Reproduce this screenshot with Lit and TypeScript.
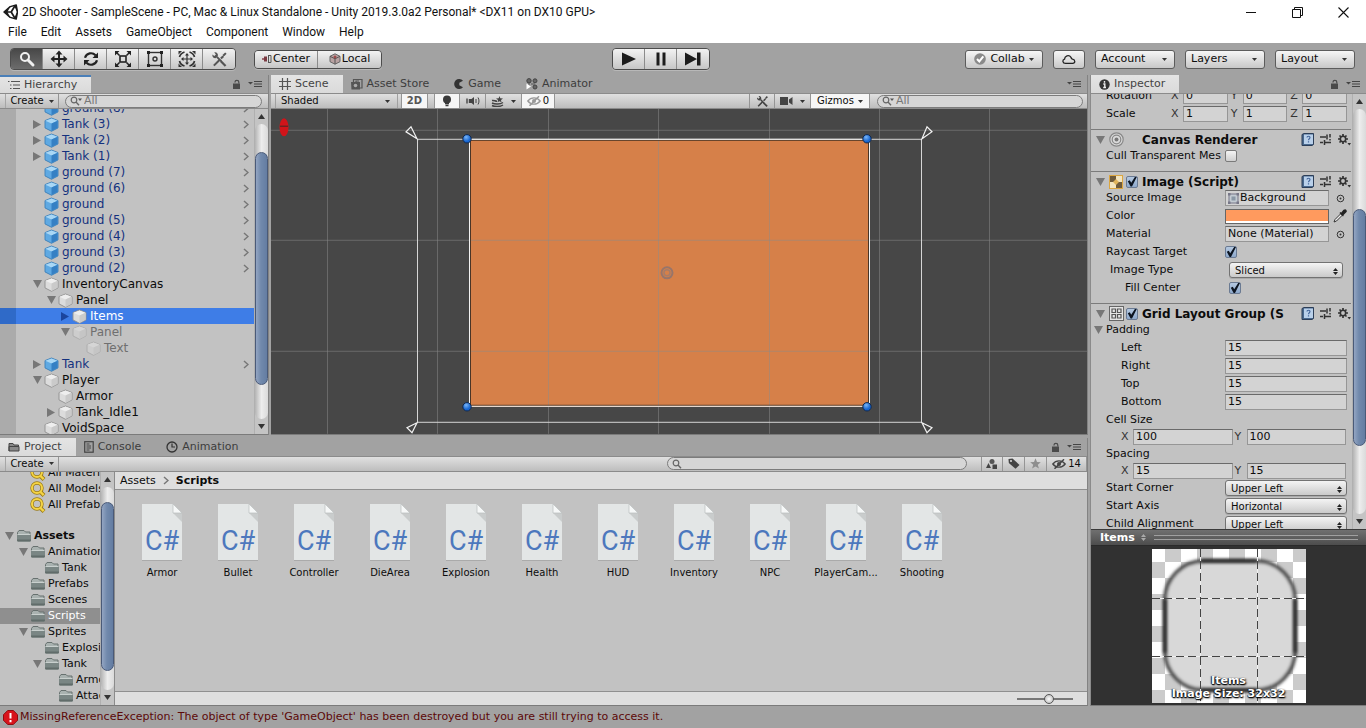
import { LitElement, html, css, svg, nothing, TemplateResult } from "lit";
import { customElement } from "lit/decorators.js";
import { classMap } from "lit/directives/class-map.js";

type Node = {
  name: string;
  level: number;
  kind?: "prefab" | "plain";
  arrow?: "open" | "closed";
  chevron?: boolean;
  selected?: boolean;
  dim?: boolean;
};

const prefab = (name: string, arrow?: "open" | "closed"): Node => ({
  name, level: 0, kind: "prefab", arrow, chevron: true,
});

const HIERARCHY: Node[] = [
  prefab("ground (8)"),
  prefab("Tank (3)", "closed"),
  prefab("Tank (2)", "closed"),
  prefab("Tank (1)", "closed"),
  prefab("ground (7)"),
  prefab("ground (6)"),
  prefab("ground"),
  prefab("ground (5)"),
  prefab("ground (4)"),
  prefab("ground (3)"),
  prefab("ground (2)"),
  { name: "InventoryCanvas", level: 0, arrow: "open" },
  { name: "Panel", level: 1, arrow: "open" },
  { name: "Items", level: 2, arrow: "closed", selected: true },
  { name: "Panel", level: 2, arrow: "open", dim: true },
  { name: "Text", level: 3, dim: true },
  prefab("Tank", "closed"),
  { name: "Player", level: 0, arrow: "open" },
  { name: "Armor", level: 1 },
  { name: "Tank_Idle1", level: 1, arrow: "closed" },
  { name: "VoidSpace", level: 0 },
];

type Folder = { name: string; level: number; open?: boolean; icon?: "search" | "folder"; selected?: boolean; bold?: boolean };

const FOLDERS: (Folder | null)[] = [
  { name: "All Materials", level: 1, icon: "search" },
  { name: "All Models", level: 1, icon: "search" },
  { name: "All Prefabs", level: 1, icon: "search" },
  null,
  { name: "Assets", level: 0, open: true, bold: true },
  { name: "Animation", level: 1, open: true },
  { name: "Tank", level: 2 },
  { name: "Prefabs", level: 1 },
  { name: "Scenes", level: 1 },
  { name: "Scripts", level: 1, selected: true },
  { name: "Sprites", level: 1, open: true },
  { name: "Explosion", level: 2 },
  { name: "Tank", level: 2, open: true },
  { name: "Armor", level: 3 },
  { name: "Attack", level: 3 },
];

const SCRIPTS = [
  "Armor", "Bullet", "Controller", "DieArea", "Explosion", "Health",
  "HUD", "Inventory", "NPC", "PlayerCam...", "Shooting",
];

const icon = (w: number, h: number, body: unknown, cls = "") =>
  html`<svg class=${cls} width=${w} height=${h} viewBox="0 0 ${w} ${h}" fill="none" stroke="none" aria-hidden="true">${body}</svg>`;

const unityLogo = icon(15, 16, svg`
  <path d="M13.200 1 7.200 2.600 1 8l6.200 5.400 6 1.600 1.300-7z" stroke="#1c1c1c" stroke-width="1.500" stroke-linejoin="round"/>
  <path d="M1 8h7.200M8.200 8l3.600-6M8.200 8l3.600 6" stroke="#1c1c1c" stroke-width="1.700"/>
  <path d="M13.200 1 11 1.600 14 8 11 14.400l2.200.6 1.300-7z" fill="#1c1c1c"/>
  <path d="M7.200 2.600 1 8l6.200 5.400L4.500 8z" fill="#1c1c1c"/>`);

const handIcon = icon(20, 18, svg`
  <circle cx="8" cy="7" r="4" stroke="#f0f0f0" stroke-width="2"/>
  <path d="m11 10 5 5" stroke="#f0f0f0" stroke-width="3" stroke-linecap="round"/>`);
const moveIcon = icon(20, 18, svg`
  <path d="M10 3v12M4 9h12" stroke="#222" stroke-width="2"/>
  <path d="M10 0.5 13.5 4.5h-7zM10 17.5 13.5 13.5h-7zM1.5 9 5.5 5.5v7zM18.5 9 14.5 5.5v7z" fill="#222"/>`);
const rotateIcon = icon(20, 18, svg`
  <path d="M4 7.800C5.500 2.800 11.500 2 14.500 5.200M16 10.200C14.500 15.200 8.500 16 5.500 12.800" stroke="#222" stroke-width="2.200"/>
  <path d="M17 2.500v5.500h-5.500zM3 15.500V10h5.500z" fill="#222"/>`);
const scaleIcon = icon(20, 18, svg`
  <rect x="7" y="6" width="6" height="6" stroke="#222" stroke-width="1.600"/>
  <path d="m3 2 3.500 3.500M17 2l-3.500 3.500M3 16l3.500-3.500M17 16l-3.500-3.500" stroke="#222" stroke-width="1.500"/>
  <path d="M2 1h4.500L2 5.500zM18 1h-4.500L18 5.500zM2 17h4.500L2 12.500zM18 17h-4.500l4.500-4.500z" fill="#222"/>`);
const rectIcon = icon(20, 18, svg`
  <rect x="3.500" y="2.500" width="13" height="13" stroke="#333" stroke-width="1.400"/>
  <circle cx="10" cy="9" r="2" stroke="#333" stroke-width="1.400"/>
  <path d="M2 1h3v3H2zM15 1h3v3h-3zM2 14h3v3H2zM15 14h3v3h-3z" fill="#222"/>`);
const transformIcon = icon(20, 18, svg`
  <path d="M10 4v10M5 9h10" stroke="#333" stroke-width="1.200"/>
  <path d="m10 3 2 2.500H8zM10 15l2-2.500H8zM4 9l2.500-2v4zM16 9l-2.500-2v4z" fill="#333"/>
  <path d="M2.500 7C3 4.800 5 2.800 7.500 2M17.500 7C17 4.800 15 2.800 12.500 2M2.500 11c.5 2.200 2.500 4.200 5 5M17.500 11c-.5 2.200-2.500 4.200-5 5" stroke="#333" stroke-width="1.700"/>
  <path d="M1.500 1h3.500l-3.500 3.500zM18.500 1H15l3.500 3.500zM1.500 17h3.500l-3.500-3.500zM18.500 17H15l3.500-3.500z" fill="#333"/>`);
const wrench = (w: number, h: number, color = "#555") => html`<svg width=${w} height=${h} viewBox="0 0 18 18" fill="none" aria-hidden="true">
  <path d="M3 15.500 9 9.500M10.500 8 13 5.500" stroke=${color} stroke-width="2.200"/>
  <path d="m13 3.500 2-2 1.500 1.500-2 2-2 1z" fill=${color}/>
  <path d="M6.500 6.500 11 11" stroke=${color} stroke-width="2"/>
  <path d="M3.500 1.500C6 1 8 3 7.200 5.800L5.500 7.500C3 8 1 6.300 1.500 3.600L3.500 5.300 5.200 3.700z" fill=${color}/>
  <path d="m11.300 10 5 5-1.700 1.700-5-5z" fill=${color}/></svg>`;

const playIcon = icon(16, 16, svg`<path d="M1 1.500 15 8 1 14.500z" fill="#1c1c1c"/>`);
const pauseIcon = icon(16, 16, svg`<path d="M3.500 1.500h3v13h-3zM9.500 1.500h3v13h-3z" fill="#1c1c1c"/>`);
const stepIcon = icon(16, 16, svg`<path d="M0 1.500 12 8 0 14.500zM12 1.500h3.500v13H12z" fill="#1c1c1c"/>`);

const pivotIcon = icon(10, 10, svg`
  <path d="M0 5h3" stroke="#8a4048" stroke-width="1.400"/><path d="M2 2.500h3v5H2z" fill="#7a3a42"/>
  <path d="M6 1.500h3M6 8.500h3M9 1.500v7M6.500 1.500v7" stroke="#555"/>`);
const localIcon = icon(12, 12, svg`
  <path d="M6 .8 11 3.300v5.400L6 11.200 1 8.700V3.300z" fill="#b9a2a2" stroke="#666"/>
  <path d="M1 3.300 6 5.800l5-2.500M6 5.800v5.400" stroke="#555"/><circle cx="6" cy="4" r="1.500" fill="#9c4a4a"/>`);
const collabIcon = icon(12, 12, svg`
  <circle cx="6" cy="6" r="5.800" fill="#8a8a8a"/><path d="m3 6 2.300 2.400L9.300 3.400" stroke="#fff" stroke-width="2"/>`);
const cloudIcon = icon(16, 12, svg`
  <path d="M4.500 10.300C1.500 10.300 1 7 3.500 6.200 3.700 3 7.800 1 10 4.300c.5 1.500.3 1.700 1.500 1.900 3 .6 3 4.100.2 4.100z" stroke="#222" stroke-width="1.300"/>`);

const smallCaret = icon(5, 3, svg`<path d="M0 0h5L2.500 3z" fill="#333"/>`, "caret");
const updown = icon(5, 7, svg`<path d="M0 3 2.500 0 5 3zM0 4 2.500 7 5 4z" fill="#222"/>`, "caret");

const hierarchyIcon = icon(12, 10, svg`
  <path d="M3 1.500h9M5 5h7M5 8.500h7M0 1.500h1.500M2 5h1.500M2 8.500h1.500" stroke="#555" stroke-width="1.200"/>`);
const sceneIcon = icon(12, 12, svg`
  <path d="M3.500 0v12M8.500 0v12M0 3.500h12M0 8.500h12" stroke="#555" stroke-width="1.200"/>`);
const storeIcon = icon(12, 12, svg`
  <path d="M0 4h9v7.500H.5z" fill="#555"/><path d="M2.500 4V1.500H11V10H9M5 4V3h3" stroke="#555" stroke-width="1.200"/><circle cx="4.500" cy="7.500" r="1.800" fill="#aaa"/>`);
const gameIcon = icon(10, 10, svg`
  <path d="M9 1.800A5 5 0 1 0 9 8.200L5.300 6.200V3.800z" fill="#333"/>`);
const animatorIcon = icon(12, 12, svg`
  <circle cx="3" cy="2.800" r="2.200" fill="#666" stroke="#444"/><circle cx="9" cy="2.800" r="2" fill="#666" stroke="#444"/>
  <circle cx="9" cy="9" r="2" fill="#666" stroke="#444"/><path d="M3 5v4M5 6h4" stroke="#555"/>
  <path d="M.5 5.500v6l4.500-3z" fill="#fff"/>`);
const infoIcon = icon(11, 11, svg`
  <circle cx="5.500" cy="5.500" r="5.200" fill="#333"/><path d="M5.500 2v1.700M4.300 5h1.500v3.500M4.200 8.500h2.800" stroke="#eee" stroke-width="1.400"/>`);
const projectIcon = icon(12, 10, svg`
  <path d="M1 9V1.500h4l1 1.500h4.500v1.500M1 4.500h10V9H1z" fill="#888" stroke="#444"/>`);
const consoleIcon = icon(10, 12, svg`
  <rect x=".7" y=".7" width="8.500" height="10.500" stroke="#444" stroke-width="1.200"/><path d="M2.500 3h3M2.500 5h4.500M2.500 7h4.500M2.500 9h3" stroke="#444"/>`);
const clockIcon = icon(12, 12, svg`
  <circle cx="6" cy="6" r="5" stroke="#333" stroke-width="1.300"/><path d="M6 2.500V6h3" stroke="#333" stroke-width="1.200"/>`);

const lock = icon(9, 10, svg`
  <path d="M1 4.500h7V10H1z" fill="#4a4a4a"/><path d="M3 3.500V3C3 .800 6.800.800 6.800 3v1.500" stroke="#4a4a4a" stroke-width="1.200"/>`);
const menuMark = icon(14, 8, svg`
  <path d="M0 2h5L2.500 4.500z" fill="#444"/><path d="M6 1.500h8M6 4h8M6 6.500h8" stroke="#444"/>`);

const searchIcon = (withCaret: boolean) => icon(13, 10, svg`
  <circle cx="4" cy="4" r="2.800" stroke="#666" stroke-width="1.200"/><path d="m6 6 3 3.300" stroke="#666" stroke-width="1.300"/>
  ${withCaret ? svg`<path d="M8 2.500h4L10 5z" fill="#555"/>` : nothing}`);

const bulb = icon(10, 12, svg`<circle cx="5" cy="4.500" r="4" fill="#3a3a3a"/><path d="M3 8.500h4M3.500 10.500h3" stroke="#3a3a3a" stroke-width="1.400"/>`);
const speaker = icon(14, 10, svg`
  <path d="M1 2.500v5M3.500 3v4" stroke="#444" stroke-width="1.400"/><path d="M4 3h1.500L8 1v8L5.500 7H4z" fill="#444"/>
  <path d="M10 3v4M12 1.500C13.300 3.500 13.300 6.500 12 8.500" stroke="#444"/>`);
const effects = icon(13, 11, svg`
  <path d="M1 4.500c2-.5 3 .8 5 .8M1 7c3 1.500 8 1.500 11-.5M1 9.500c3 1.500 8 1.500 11-.5" stroke="#444" stroke-width="1.500"/>
  <path d="m8.500 0 .8 2.200 2.700.3-2 1.500.5 2.200-2-1-2 1 .5-2.200-2-1.500 2.700-.3z" fill="#444"/>`);
const eyeOff = (c: string) => icon(14, 10, svg`
  <path d="M.8 5C4 .8 10 .8 13.200 5 10 9.200 4 9.200.8 5z" stroke=${c} stroke-width="1.300"/><circle cx="7" cy="5" r="2" fill=${c}/>
  <path d="M2.500 9.800 12 .3" stroke=${c} stroke-width="1.500"/>`);
const cameraIcon = icon(13, 8, svg`<path d="M0 0h8v8H0zM9 2.500 12.500 0v8L9 5.500z" fill="#444"/>`);
const shapesIcon = icon(12, 10, svg`
  <circle cx="6" cy="2.500" r="2.500" fill="#555"/><path d="M0 9 2.500 4 5 9zM6.500 5.500h4.500V10H6.500z" fill="#444"/>`);
const tagIcon = icon(12, 11, svg`
  <path d="M.5 1 4.500.5 11.500 7 7.500 10.800.800 5z" fill="#444"/><circle cx="3" cy="3" r="1" fill="#ddd"/>`);
const starIcon = icon(11, 11, svg`<path d="m5.500.3 1.500 3.700 3.800.2-3 2.500 1.100 3.900-3.400-2.200-3.400 2.200 1.100-3.900-3-2.500L4 4z" fill="#8e8e8e"/>`);

const cube = (kind: "prefab" | "plain") => {
  const [t, l, r, s] = kind === "prefab"
    ? ["#a9d7f5", "#5fa9e2", "#3580c4", "#3c7fb8"]
    : ["#eeeeee", "#dcdcdc", "#cacaca", "#8e8e8e"];
  return icon(15, 15, svg`
    <path d="M7.500 1 14 3.600v7.300L7.500 14.300 1 10.900V3.600z" fill=${l} stroke=${s} stroke-width=".9"/>
    <path d="M7.500 1.500 13.600 3.800 7.500 6.500 1.400 3.800z" fill=${t}/>
    <path d="m7.500 6.500 6.100-2.700v6.900l-6.100 3.200z" fill=${r}/>`);
};

const folder = icon(16, 13, svg`
  <path d="M1.500 11.500V3.500L3 1.500h5L9.500 3H14v2" fill="#a9b2b0" stroke="#67716f"/>
  <path d="M1 5h14v6.500q0 1-1 1H2q-1 0-1-1V5z" fill="#7a8684"/><path d="M1.500 5.500h13" stroke="#c9d0ce"/>
  <path d="M1 10.500h14q0 2-1 2H2q-1 0-1-2z" fill="#616c6a"/>`);
const yellowSearch = icon(16, 16, svg`
  <circle cx="7" cy="7" r="5" stroke="#9a7a14" stroke-width="3.400"/><path d="m10.500 11 3.500 3.500" stroke="#9a7a14" stroke-width="4"/>
  <circle cx="7" cy="7" r="5" stroke="#f5d445" stroke-width="2"/><path d="m10.500 11 3.200 3.200" stroke="#f5d445" stroke-width="2.400"/>`);

const arrow = (open: boolean, cls = "arrow") => open
  ? icon(9, 8, svg`<path d="M0 0h9L4.500 8z"/>`, cls)
  : icon(8, 9, svg`<path d="M0 0v9l8-4.500z"/>`, cls);
const chevron = icon(6, 9, svg`<path d="m1 1 4 3.500-4 3.500" stroke="#777" stroke-width="1.500"/>`);

const bookIcon = icon(13, 13, svg`
  <path d="M1 1.500 3 .5h9.500v11L11 12.500H1z" fill="#48688e" stroke="#2c3e58"/><rect x="3" y="1.500" width="9" height="9.500" fill="#b9d0ea"/>
  <path d="M6 4.500C6 2.800 9 2.800 9 4.500 9 5.700 7.500 5.700 7.500 7.200M7.500 8.300v1.300" stroke="#44669a" stroke-width="1.200"/>`);
const presetIcon = icon(11, 11, svg`
  <path d="M0 3h6M0 8.500h3M5 8.500h6" stroke="#333" stroke-width="1.400"/><path d="M7 .500v5M4.500 6v5M10 0v3.500M10 5v1.500" stroke="#333" stroke-width="1.500"/>`);
const gearIcon = icon(13, 12, svg`
  <circle cx="5" cy="5" r="2.700" stroke="#333" stroke-width="1.600"/>
  <path d="M5 0v2M5 8v2M0 5h2M8 5h2M1.500 1.500 3 3M7 7l1.500 1.500M1.500 8.500 3 7M7 3l1.500-1.500" stroke="#333" stroke-width="1.700"/>
  <path d="M9.500 9h3.500l-1.700 2.500z" fill="#333"/>`);
const targetIcon = icon(15, 15, svg`
  <circle cx="7.500" cy="7.500" r="6.700" fill="#dadada" stroke="#888" stroke-width="1.200"/><circle cx="7.500" cy="7.500" r="4.300" stroke="#888" stroke-width="1.200"/><circle cx="7.500" cy="7.500" r="2" fill="#777"/>`);
const imageIcon = icon(14, 14, svg`
  <rect x=".5" y=".5" width="13" height="13" fill="#f3e5c0" stroke="#dca640"/><path d="M1 1h6v6H1zM7 7h6v6H7z" fill="#6d5a3c"/>
  <path d="m7 4 3 3-3 3-3-3z" fill="#e0b45c"/>`);
const gridIcon = icon(15, 15, svg`
  <rect x=".5" y=".5" width="14" height="14" fill="#e4e4e4" stroke="#666"/>
  <path d="M3 3h3.500v3.500H3zM8.500 3H12v3.500H8.500zM3 8.500h3.500V12H3zM8.500 8.500H12V12H8.500z" stroke="#555" stroke-width="1.200"/>`);
const pickIcon = icon(9, 9, svg`<circle cx="4.500" cy="4.500" r="3.300" stroke="#333"/><circle cx="4.500" cy="4.500" r="1" fill="#333"/>`);
const dropperIcon = icon(14, 14, svg`
  <path d="M1 13 2 10.500 8 4.500 9.500 6 3.500 12z" fill="#eee" stroke="#333"/><path d="m7 3.500 3.500 3.500M8.500 4.500 11 1.500q2-1 2 1l-3 3z" fill="#222" stroke="#222" stroke-width="1.600"/>`);
const spriteIcon = icon(11, 11, svg`
  <rect x="1" y="1" width="9" height="9" fill="#c3cbd2" stroke="#778"/><rect x="3.500" y="3.500" width="4" height="4" fill="#8a98a6"/>
  <path d="M0 0h2.500v2.500H0zM8.500 0H11v2.500H8.500zM0 8.500h2.500V11H0zM8.500 8.500H11V11H8.500z" fill="#778"/>`);
const errorIcon = icon(15, 15, svg`
  <path d="M4.700.5h5.600l4.200 4.200v5.600l-4.200 4.200H4.700L.5 10.300V4.700z" fill="#d8141c" stroke="#8e0c10"/>
  <path d="M7.500 3v5.500M7.500 10v2.200" stroke="#fff" stroke-width="2"/>`);

const scriptFile = html`<svg class="file" viewBox="0 0 40 57" aria-hidden="true">
  <path d="M0 1h31l9 9v47H0z" fill="#9a9a9a" opacity=".6"/>
  <path d="M0 0h31l9 9v47H0z" fill="#e3e6e6"/><path d="m31 9 9 9V9z" fill="#c9cccc"/><path d="M31 0v9h9z" fill="#f6f8f8" stroke="#b9bdbd" stroke-width=".7"/>
  <text class="cs" x="20" y="46" text-anchor="middle">C#</text></svg>`;

@customElement("app-root")
export class AppRoot extends LitElement {
  static styles = css`
    :host {
      display: grid;
      grid-template-rows: 24px 19px 32px minmax(0, 1fr) 22px;
      height: 100vh;
      min-width: 960px;
      overflow: hidden;
      background: #a2a2a2;
      color: #0c0c0c;
      font: 11px/16px "DejaVu Sans", Verdana, sans-serif;
    }
    * { box-sizing: border-box; }
    button, input, select { font: inherit; color: inherit; margin: 0; padding: 0; border: 0; border-radius: 0; background: none; min-width: 0; }
    svg { flex: none; display: block; }
    ul { list-style: none; margin: 0; padding: 0; }
    h1, h2 { margin: 0; font: inherit; }

    .titlebar, .menubar { display: flex; align-items: center; background: #fff; color: #111; font: 12px/18px Roboto, "Noto Sans", sans-serif; }
    .titlebar { padding-left: 3px; gap: 4px; }
    .titlebar h1 { flex: 1; white-space: nowrap; }
    .winbtns { display: flex; }
    .winbtns button { width: 46px; height: 22px; display: grid; place-items: center; }
    .menubar { padding: 0 8px 2px; gap: 14px; }
    .menubar button { line-height: 17px; }

    .toolbar { display: grid; grid-template-columns: 14fr auto 15fr; align-items: center; }
    .left { display: flex; align-items: center; gap: 18px; padding-left: 10px; }
    .right { display: flex; align-items: center; justify-content: flex-end; gap: 10px; padding-right: 11px; }
    .group { display: flex; border: 1px solid #4c4c4c; border-radius: 4px; overflow: hidden; box-shadow: 0 1px 0 #b8b8b8; }
    .group button { display: flex; align-items: center; justify-content: center; gap: 1px; width: 32px; height: 20px; background: linear-gradient(#f2f2f2, #c6c6c6); border-right: 1px solid #8b8b8b; }
    .group button:last-child { border-right: 0; }
    .group .on { background: linear-gradient(#484848, #6c6c6c); }
    .group.wide button { width: 63px; height: 17px; }
    .pill { display: flex; align-items: center; justify-content: center; gap: 4px; height: 19px; border: 1px solid #5c5c5c; border-radius: 3px; background: linear-gradient(#f6f6f6, #c8c8c8); }
    .collab { width: 78px; }
    .cloud { width: 32px; }

    .drop { display: grid; align-items: center; min-width: 0; }
    .drop > * { grid-area: 1 / 1; }
    .drop .caret { justify-self: end; pointer-events: none; margin-right: 7px; }
    .drop select { appearance: none; width: 100%; height: 100%; }
    .drop.tool { width: 80px; height: 19px; border: 1px solid #5c5c5c; border-radius: 3px; background: linear-gradient(#f6f6f6, #c8c8c8); }
    .drop.tool select { padding-left: 5px; }

    .work { display: grid; grid-template-columns: minmax(0, 1fr) 276px; gap: 2px; min-height: 0; }
    .docks { display: grid; grid-template-rows: minmax(0, 359fr) minmax(0, 268fr); gap: 3px; min-height: 0; }
    .upper { display: grid; grid-template-columns: 269px minmax(0, 1fr); gap: 2px; min-height: 0; }
    .dock { display: flex; flex-direction: column; min-height: 0; min-width: 0; border-right: 1px solid #838383; border-bottom: 1px solid #7b7b7b; }

    .tabs { display: flex; flex: none; height: 18px; align-items: stretch; }
    .tab { display: flex; align-items: center; gap: 4px; padding: 0 17px 0 8px; color: #3d3d3d; white-space: nowrap; }
    .tab.active { padding-right: 14px; background: linear-gradient(#e4e4e4, #dadada); color: #444; }
    .tab.focus { border-top: 2px solid #4a7fb8; }
    .marks { display: flex; align-items: center; gap: 7px; margin-left: auto; padding-right: 6px; }
    .marks button { display: flex; }

    .strip { display: flex; flex: none; height: 16px; align-items: center; border-top: 1px solid #8b8b8b; border-bottom: 1px solid #8b8b8b; background: linear-gradient(#e0e0e0, #bdbdbd); font-size: 10px; line-height: 14px; }
    .strip button { display: flex; align-items: center; justify-content: center; gap: 2px; height: 14px; border-right: 1px solid #959595; }
    .strip .white { background: #f6f6f6; }
    .strip .create { width: 54px; gap: 5px; margin-left: 5px; border-left: 1px solid #a6a6a6; }
    .search { display: flex; align-items: center; gap: 1px; height: 13px; padding: 0 4px; border: 1px solid #7c7c7c; border-radius: 7px; background: #d6d6d6; min-width: 0; }
    .search input { flex: 1; width: 100%; height: 11px; font-size: 11px; color: #777; outline: none; }
    .search input::placeholder { color: #777; opacity: 1; }
    .grow { flex: 1; }

    .body { display: flex; flex: 1; min-height: 0; min-width: 0; overflow: hidden; background: #c2c2c2; }
    .tree { flex: 1; min-width: 0; overflow: hidden; }
    .arrow { fill: #777; }
    .hier { background: linear-gradient(90deg, #ababab 16px, #c2c2c2 16px); font-size: 12px; }
    .hier li:first-child { margin-top: -9px; }
    .row { display: flex; align-items: center; height: 16px; white-space: nowrap; }
    .twist { display: grid; place-items: center; width: 14px; flex: none; }
    .twist + svg { margin-right: 3px; }
    .row .chev { margin-left: auto; padding-right: 5px; }
    .prefab { color: #14317e; }
    .dim { color: #6f6f6f; }
    .dim .twist + svg { opacity: .45; }
    .hier .selected { background: linear-gradient(90deg, #2f6ac8 16px, #3e7de7 16px); color: #fff; }
    .selected .arrow { fill: #1b459e; }
    .folders { width: 100px; flex: none; overflow: hidden; }
    .folders li:first-child { margin-top: -7px; }
    .folders .gap { height: 15px; }
    .folders .selected { background: #8f8f8f; color: #fff; }
    .folders .twist + svg { margin-right: 2px; }
    .bold { font-weight: bold; }

    .scroll { display: flex; flex-direction: column; width: 14px; flex: none; background: #c4c4c4; border-left: 1px solid #b0b0b0; }
    .cap { display: grid; place-items: center; height: 15px; flex: none; }
    .track { display: flex; flex-direction: column; flex: 1; border-radius: 7px; background: linear-gradient(90deg, #b4b4b4, #ededed 50%, #dadada); min-height: 0; }
    .thumb { border-radius: 7px; border: 1px solid #4a5a78; background: linear-gradient(90deg, #93a5c2, #7189ac 45%, #647da2); }

    .shaded { width: 123px; height: 14px; margin-left: 4px; border-left: 1px solid #a0a0a0; border-right: 1px solid #a0a0a0; }
    .shaded select { padding-left: 5px; }
    .strip .two { width: 27px; margin: 0 6px 0 3px; font-weight: bold; color: #555; border-left: 1px solid #959595; }
    .w26 { width: 26px; }
    .w36 { width: 36px; }
    .eye { width: 33px; }
    .l { border-left: 1px solid #959595; }
    .strip .gizmos { width: 59px; gap: 4px; }
    .s-scene { width: 206px; margin: 0 4px 0 7px; }
    .s-hier { flex: 1; margin: 0 6px 0 6px; }
    .s-proj { width: 300px; margin-right: 14px; }
    .strip .w22 { width: 22px; }
    .count { width: 40px; }
    .viewport { flex: 1; min-height: 0; background: #474747; overflow: hidden; }
    .viewport svg { width: 100%; height: 100%; }

    .assets { display: flex; flex-direction: column; flex: 1; min-width: 0; border-left: 1px solid #8b8b8b; }
    .crumbs { display: flex; align-items: center; gap: 7px; height: 18px; flex: none; padding: 1px 0 0 5px; background: #dedede; border-bottom: 1px solid #8f8f8f; }
    .crumbs a { color: inherit; text-decoration: none; }
    .files { flex: 1; display: grid; grid-template-columns: repeat(auto-fill, 76px); align-content: start; padding: 14px 9px; overflow: hidden; }
    .files button { display: flex; flex-direction: column; align-items: center; gap: 4px; font-size: 10px; line-height: 16px; }
    .file { width: 40px; height: 57px; }
    .cs { font: 27px Roboto, sans-serif; fill: #4d78bd; }
    .foot { display: flex; flex: none; align-items: center; justify-content: flex-end; height: 14px; padding-right: 14px; background: #dedede; border-top: 1px solid #8f8f8f; }
    .foot input { appearance: none; width: 56px; height: 12px; background: linear-gradient(#777, #777) center / 100% 2px no-repeat; }
    .foot input::-webkit-slider-thumb { appearance: none; width: 10px; height: 10px; border: 1px solid #555; border-radius: 5px; background: radial-gradient(#fff, #b0b0b0); }

    .inspector { display: flex; flex-direction: column; min-height: 0; border-left: 1px solid #8b8b8b; border-bottom: 1px solid #7b7b7b; }
    .props { flex: 1; min-width: 0; overflow: hidden; padding-right: 1px; }
    .insp-body { border-top: 1px solid #8b8b8b; }
    .section { padding-bottom: 6px; border-bottom: 1px solid #7b7b7b; }
    .section.first { margin-top: -7px; }
    .prop { display: grid; grid-template-columns: 119px minmax(0, 1fr); align-items: center; height: 18px; padding: 0 4px 0 15px; white-space: nowrap; }
    .prop > label, .prop > .lab { min-width: 0; }
    .prop > .fold { display: flex; align-items: center; gap: 3px; margin-left: -12px; }
    .in1 { padding-left: 15px; }
    .in0 { padding-left: 4px; }
    .in2 { padding-left: 19px; }
    .field { width: 100%; height: 16px; padding: 0 2px; background: #d3d3d3; border: 1px solid #969696; border-top-color: #6a6a6a; outline: none; color: #0c0c0c; }
    .xyz { display: grid; grid-template-columns: repeat(3, minmax(0, 1fr)); margin-left: -57px; }
    .xyz label, .xy label { display: grid; grid-template-columns: 12px minmax(0, 1fr); align-items: center; color: #333; padding-left: 2px; }
    .xyz label { padding-left: 3px; }
    .xy { display: grid; grid-template-columns: 1fr 1fr; height: 16px; padding: 0 5px 0 28px; }
    .head { display: grid; grid-template-columns: 11px 15px 14px minmax(0, 1fr) auto; align-items: center; height: 17px; padding: 2px 4px 0 5px; gap: 0 2px; font-weight: bold; white-space: nowrap; font-size: 12px; }
    .head h2 { overflow: hidden; }
    .tools { display: flex; align-items: center; gap: 6px; }
    .tools button { display: flex; }
    .tools button:last-child { margin: 0 -4px 0 1px; }
    .check { appearance: none; width: 12px; height: 12px; border: 1px solid #7a7a7a; border-radius: 2px; background: linear-gradient(#f4f4f4, #cfcfcf); display: grid; }
    .check:checked { background: linear-gradient(#b4c8e0, #8ea9cc); border-color: #6a7a92; }
    .check:checked::before { content: ""; background: #0c1420; clip-path: polygon(8% 48%, 28% 38%, 42% 62%, 82% 0, 100% 0, 50% 100%, 36% 100%); }
    .obj { display: grid; grid-template-columns: minmax(0, 1fr) 18px; align-items: center; }
    .obj > button:last-child { display: grid; justify-content: end; align-items: center; }
    .obj > .pick:last-child { padding-right: 2px; }
    .objbox { display: flex; align-items: center; width: 100%; padding: 0 2px; gap: 1px; }
    .swatch { height: 15px; background: linear-gradient(#ff9a5e 11px, #fff 11px); border: 1px solid #666; }
    .combo { height: 16px; border: 1px solid #727272; border-radius: 3px; background: linear-gradient(#f4f4f4, #cacaca); font-size: 10px; box-shadow: 0 1px 0 #aaa; }
    .combo select { padding-left: 5px; }
    .drop.combo .caret { margin-right: 4px; }
    .combo.near { margin: 0 4px 0 4px; }
    .near.check { margin-left: 4px; }

    .pv-head { display: flex; flex: none; align-items: center; height: 17px; padding: 0 8px 0 9px; gap: 6px; color: #fff; font-weight: bold; background: linear-gradient(#707070, #4d4d4d); border-top: 1px solid #3a3a3a; border-bottom: 1px solid #2a2a2a; }
    .grip { flex: 1; height: 5px; border-top: 1px solid #a0a0a0; border-bottom: 1px solid #a0a0a0; margin-left: 2px; }
    .preview { display: grid; place-items: center; flex: none; height: 159px; background: #313131; overflow: hidden; }
    .preview > * { grid-area: 1 / 1; }
    .caption { align-self: end; padding-bottom: 5px; color: #fff; font-weight: bold; line-height: 13px; text-align: center; text-shadow: 0 1px 1px #000, 1px 1px 2px #000, -1px 0 1px #333; }

    .status { display: flex; align-items: center; gap: 2px; padding-left: 3px; color: #5c0808; white-space: nowrap; }
  `;

  private drop(name: string, value: string, cls: string, mark: TemplateResult) {
    return html`<span class="drop ${cls}"><select aria-label=${name}><option>${value}</option></select>${mark}</span>`;
  }

  private scroll(before: number, thumb: number, after: number) {
    return html`<div class="scroll">
      <span class="cap">${icon(7, 5, svg`<path d="M0 5h7L3.500 0z" fill="#333"/>`)}</span>
      <div class="track">
        <div style="flex:${before}"></div><div class="thumb" style="flex:${thumb}"></div><div style="flex:${after}"></div>
      </div>
      <span class="cap">${icon(7, 5, svg`<path d="M0 0h7L3.500 5z" fill="#333"/>`)}</span>
    </div>`;
  }

  private marks(withLock = true) {
    return html`<span class="marks">
      ${withLock ? html`<button aria-label="Lock">${lock}</button>` : nothing}
      <button aria-label="Panel menu">${menuMark}</button></span>`;
  }

  private tab(name: string, ico: TemplateResult, cls = "") {
    return html`<button class="tab ${cls}">${ico}<span>${name}</span></button>`;
  }

  private search(cls: string, placeholder: string) {
    return html`<label class="search ${cls}">${searchIcon(!!placeholder)}<input type="text" aria-label="Search" placeholder=${placeholder}></label>`;
  }

  private treeRow(n: Node) {
    return html`<li class=${classMap({ row: true, prefab: n.kind === "prefab", dim: !!n.dim, selected: !!n.selected })}
      style="padding-left:${30 + 14 * n.level}px">
      <span class="twist">${n.arrow ? arrow(n.arrow === "open") : nothing}</span>${cube(n.kind ?? "plain")}
      <span>${n.name}</span>${n.chevron ? html`<span class="chev">${chevron}</span>` : nothing}</li>`;
  }

  private folderRow(f: Folder | null) {
    if (!f) return html`<li class="row gap"></li>`;
    return html`<li class=${classMap({ row: true, bold: !!f.bold, selected: !!f.selected })} style="padding-left:${2 + 14 * f.level}px">
      <span class="twist">${f.open ? arrow(true) : nothing}</span>${f.icon === "search" ? yellowSearch : folder}
      <span>${f.name}</span></li>`;
  }

  private scene() {
    const xs = [56, 166, 277, 387, 498, 608, 718];
    const ys = [21, 131, 242];
    const corners = [[196, 30], [596, 30], [196, 298], [596, 298]];
    return html`<svg viewBox="0 0 816 325" preserveAspectRatio="xMidYMid slice" fill="none" role="img" aria-label="Scene view">
      <defs><radialGradient id="knob" cx=".4" cy=".3"><stop offset="0" stop-color="#7ab6f8"/><stop offset="1" stop-color="#1866d0"/></radialGradient></defs>
      <rect x="199" y="31" width="399" height="267" fill="#d68049"/>
      ${xs.map((x) => svg`<path d="M${x + 0.5} 0V325" stroke="#8c8c8c" stroke-opacity=".5"/>`)}
      ${ys.map((y) => svg`<path d="M0 ${y + 0.5}H816" stroke="#8c8c8c" stroke-opacity=".5"/>`)}
      <rect x="146.500" y="30.500" width="504" height="283" stroke="#d6d6d6"/>
      <rect x="199.500" y="31.500" width="398" height="265" stroke="#4a3526"/>
      <rect x="198.500" y="30.500" width="400" height="267" stroke="#f2f2f2"/>
      <path d="m146 30-11-7 5-5zM651 30l5-12 5 5zM146 314l-10 5 5 5zM651 314l10 5-5 5z" stroke="#f2f2f2" stroke-width="1.200"/>
      ${corners.map(([x, y]) => svg`<circle cx=${x} cy=${y} r="4.200" fill="url(#knob)" stroke="#10284e"/>`)}
      <circle cx="396" cy="164" r="5.500" stroke="#98756a" stroke-width="2"/><circle cx="396" cy="164" r="3" stroke="#a77c68" stroke-width="1.500"/>
      <ellipse cx="13" cy="18.500" rx="4.500" ry="9" fill="#d0141a"/><path d="M9 17.500h8" stroke="#6e2020" stroke-width="1.500"/>
    </svg>`;
  }

  private check(id: string, on: boolean, cls = "") {
    return html`<input class="check ${cls}" type="checkbox" id=${id} aria-label=${id} ?checked=${on}>`;
  }

  private prop(label: string, control: TemplateResult, cls = "", id = "") {
    return html`<div class="prop">${id
      ? html`<label class=${cls} for=${id}>${label}</label>`
      : html`<span class="lab ${cls}">${label}</span>`}${control}</div>`;
  }

  private num(label: string, id: string, value: string) {
    return this.prop(label, html`<input class="field" id=${id} type="text" .value=${value}>`, "in1", id);
  }

  private axes(cls: string, pairs: [string, string][]) {
    return html`<div class=${cls}>${pairs.map(([a, v]) => html`<label>${a}<input class="field" type="text" .value=${v}></label>`)}</div>`;
  }

  private head(title: string, ico: TemplateResult, enabled: boolean) {
    return html`<div class="head">${arrow(true)}${ico}
      ${enabled ? this.check(title, true) : html`<span></span>`}<h2>${title}</h2>
      <span class="tools"><button aria-label="Help">${bookIcon}</button><button aria-label="Presets">${presetIcon}</button><button aria-label="Options">${gearIcon}</button></span>
    </div>`;
  }

  private combo(name: string, value: string, cls = "") {
    return this.drop(name, value, `combo ${cls}`, updown);
  }

  private inspector() {
    return html`<section class="inspector">
      <div class="tabs">${this.tab("Inspector", infoIcon, "active")}${this.marks()}</div>
      <div class="body insp-body">
        <div class="props">
          <div class="section first">
            ${this.prop("Rotation", this.axes("xyz", [["X", "0"], ["Y", "0"], ["Z", "0"]]))}
            ${this.prop("Scale", this.axes("xyz", [["X", "1"], ["Y", "1"], ["Z", "1"]]))}
          </div>
          <div class="section">
            ${this.head("Canvas Renderer", targetIcon, false)}
            ${this.prop("Cull Transparent Mes", this.check("cull", false), "", "cull")}
          </div>
          <div class="section">
            ${this.head("Image (Script)", imageIcon, true)}
            ${this.prop("Source Image", html`<span class="obj"><button class="field objbox">${spriteIcon}Background</button><button class="pick" aria-label="Pick sprite">${pickIcon}</button></span>`)}
            ${this.prop("Color", html`<span class="obj"><button class="swatch" aria-label="Color"></button><button aria-label="Eyedropper">${dropperIcon}</button></span>`)}
            ${this.prop("Material", html`<span class="obj"><button class="field objbox">None (Material)</button><button class="pick" aria-label="Pick material">${pickIcon}</button></span>`)}
            ${this.prop("Raycast Target", this.check("raycast", true), "", "raycast")}
            ${this.prop("Image Type", this.combo("Image Type", "Sliced", "near"), "in0")}
            ${this.prop("Fill Center", this.check("fill", true, "near"), "in2", "fill")}
          </div>
          <div>
            ${this.head("Grid Layout Group (S", gridIcon, true)}
            <div class="prop"><span class="lab fold">${arrow(true)}Padding</span></div>
            ${this.num("Left", "left", "15")}${this.num("Right", "right", "15")}
            ${this.num("Top", "top", "15")}${this.num("Bottom", "bottom", "15")}
            ${this.prop("Cell Size", html``)}
            ${this.axes("xy", [["X", "100"], ["Y", "100"]])}
            ${this.prop("Spacing", html``)}
            ${this.axes("xy", [["X", "15"], ["Y", "15"]])}
            ${this.prop("Start Corner", this.combo("Start Corner", "Upper Left"))}
            ${this.prop("Start Axis", this.combo("Start Axis", "Horizontal"))}
            ${this.prop("Child Alignment", this.combo("Child Alignment", "Upper Left"))}
          </div>
        </div>
        ${this.scroll(100, 235, 68)}
      </div>
      <div class="pv-head">Items ${icon(5, 7, svg`<path d="M0 3 2.500 0 5 3zM0 4 2.500 7 5 4z" fill="#aaa"/>`)}<span class="grip"></span></div>
      <div class="preview">
        <svg width="154" height="154" viewBox="0 0 154 154" fill="none" aria-hidden="true">
          <defs>
            <pattern id="chk" x="13" y="13" width="32" height="32" patternUnits="userSpaceOnUse">
              <rect width="32" height="32" fill="#fff"/><path d="M16 0h16v16H16zM0 16h16v16H0z" fill="#cbcbcb"/>
            </pattern>
            <filter id="soft" x="-10%" y="-10%" width="120%" height="120%"><feGaussianBlur stdDeviation="1.500"/></filter>
          </defs>
          <rect width="154" height="154" fill="url(#chk)"/>
          <rect x="13" y="12" width="130" height="129" rx="39" fill="#d8d8d8" stroke="#4a4a4a" stroke-width="4" filter="url(#soft)"/>
          <path d="M49 12h56M49 141h56M13 50v54M143 50v54" stroke="#222" stroke-width="3" filter="url(#soft)"/>
          <path d="M48.500 0V154M105.500 0V154M0 49.500H154M0 107.500H154" stroke="#f0f0f0"/>
          <path d="M48.500 0V154M105.500 0V154M0 49.500H154M0 107.500H154" stroke="#444" stroke-dasharray="8 4"/>
        </svg>
        <div class="caption">Items<br>Image Size: 32x32</div>
      </div>
    </section>`;
  }

  render() {
    return html`
      <header class="titlebar">${unityLogo}<h1>2D Shooter - SampleScene - PC, Mac &amp; Linux Standalone - Unity 2019.3.0a2 Personal* &lt;DX11 on DX10 GPU&gt;</h1>
        <span class="winbtns">
          <button aria-label="Minimize">${icon(10, 10, svg`<path d="M0 5.500h10" stroke="#111"/>`)}</button>
          <button aria-label="Restore">${icon(11, 11, svg`<path d="M.5 2.500h8v8h-8zM2.500 2.500v-2h8v8h-2" stroke="#111"/>`)}</button>
          <button aria-label="Close">${icon(11, 11, svg`<path d="m.5.5 10 10M10.500.5l-10 10" stroke="#111" stroke-width="1.100"/>`)}</button>
        </span>
      </header>
      <nav class="menubar">${["File", "Edit", "Assets", "GameObject", "Component", "Window", "Help"].map((m) => html`<button>${m}</button>`)}</nav>
      <div class="toolbar">
        <div class="left">
          <div class="group">
            <button class="on" aria-label="View">${handIcon}</button><button aria-label="Move">${moveIcon}</button>
            <button aria-label="Rotate">${rotateIcon}</button><button aria-label="Scale">${scaleIcon}</button>
            <button aria-label="Rect">${rectIcon}</button><button aria-label="Transform">${transformIcon}</button>
            <button aria-label="Custom tools">${wrench(17, 17)}</button>
          </div>
          <div class="group wide"><button>${pivotIcon}Center</button><button>${localIcon}Local</button></div>
        </div>
        <div class="group">
          <button aria-label="Play">${playIcon}</button><button aria-label="Pause">${pauseIcon}</button><button aria-label="Step">${stepIcon}</button>
        </div>
        <div class="right">
          <button class="pill collab">${collabIcon}Collab ${smallCaret}</button>
          <button class="pill cloud" aria-label="Cloud">${cloudIcon}</button>
          ${["Account", "Layers", "Layout"].map((n) => this.drop(n, n, "tool", smallCaret))}
        </div>
      </div>
      <main class="work">
        <div class="docks">
          <div class="upper">
            <section class="dock">
              <div class="tabs">${this.tab("Hierarchy", hierarchyIcon, "active focus")}${this.marks()}</div>
              <div class="strip"><button class="create">Create ${smallCaret}</button>${this.search("s-hier", "All")}</div>
              <div class="body"><ul class="tree hier">${HIERARCHY.map((n) => this.treeRow(n))}</ul>${this.scroll(28, 233, 34)}</div>
            </section>
            <section class="dock">
              <div class="tabs">${this.tab("Scene", sceneIcon, "active")}${this.tab("Asset Store", storeIcon)}${this.tab("Game", gameIcon)}${this.tab("Animator", animatorIcon)}${this.marks(false)}</div>
              <div class="strip">
                ${this.drop("Draw mode", "Shaded", "shaded", smallCaret)}
                <button class="white two">2D</button><button class="white w26 l" aria-label="Lighting">${bulb}</button>
                <button class="w26" aria-label="Audio">${speaker}</button><button class="w36" aria-label="Effects">${effects}&nbsp;${smallCaret}</button>
                <button class="white eye">${eyeOff("#999")}0</button><span class="grow"></span>
                <button class="w26 l" aria-label="Tools">${wrench(13, 13, "#444")}</button><button class="w36" aria-label="Camera">${cameraIcon}&nbsp;${smallCaret}</button>
                <button class="white gizmos">Gizmos ${smallCaret}</button>${this.search("s-scene", "All")}
              </div>
              <div class="viewport">${this.scene()}</div>
            </section>
          </div>
          <section class="dock">
            <div class="tabs">${this.tab("Project", projectIcon, "active")}${this.tab("Console", consoleIcon)}${this.tab("Animation", clockIcon)}${this.marks()}</div>
            <div class="strip"><button class="create">Create ${smallCaret}</button><span class="grow"></span>${this.search("s-proj", "")}
              <button class="w22 l" aria-label="Filter by type">${shapesIcon}</button><button class="w22" aria-label="Filter by label">${tagIcon}</button>
              <button class="w22" aria-label="Favorite">${starIcon}</button><button class="count">${eyeOff("#444")}14</button></div>
            <div class="body">
              <ul class="folders">${FOLDERS.map((f) => this.folderRow(f))}</ul>${this.scroll(15, 165, 19)}
              <div class="assets">
                <nav class="crumbs"><a href="#assets">Assets</a>${chevron}<a class="bold" href="#scripts">Scripts</a></nav>
                <div class="files">${SCRIPTS.map((s) => html`<button>${scriptFile}<span>${s}</span></button>`)}</div>
                <div class="foot"><input type="range" aria-label="Icon size" min="0" max="100" value="58"></div>
              </div>
            </div>
          </section>
        </div>
        ${this.inspector()}
      </main>
      <footer class="status">${errorIcon}<span>MissingReferenceException: The object of type 'GameObject' has been destroyed but you are still trying to access it.</span></footer>
    `;
  }
}
